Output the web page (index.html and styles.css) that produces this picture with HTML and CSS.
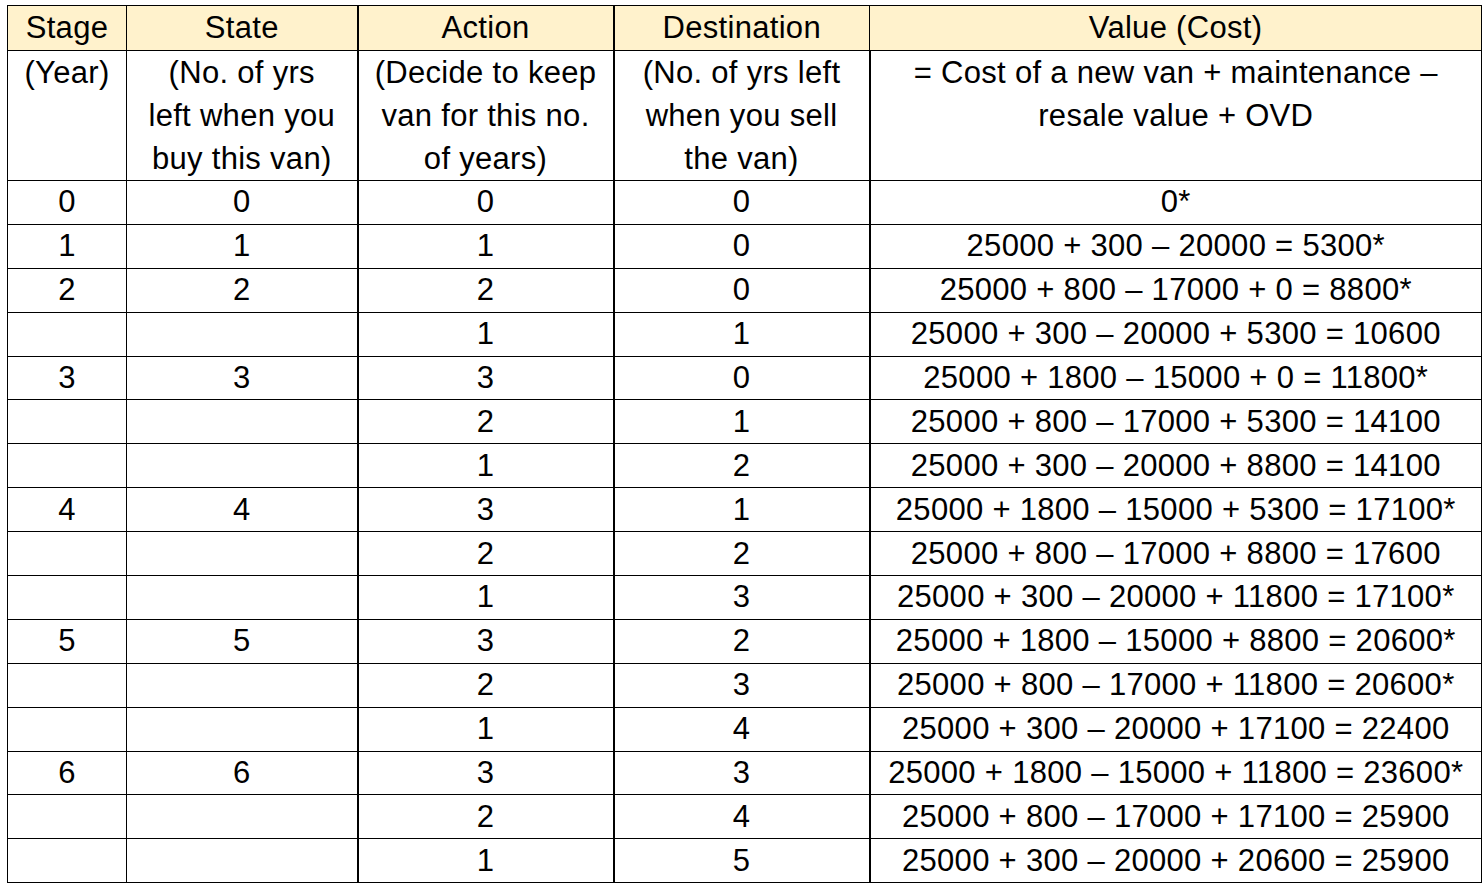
FILE: index.html
```html
<!DOCTYPE html>
<html>
<head>
<meta charset="utf-8">
<link rel="stylesheet" href="styles.css">
</head>
<body>
<table class="dp">
  <colgroup>
    <col class="c1"><col class="c2"><col class="c3"><col class="c4"><col class="c5">
  </colgroup>
  <thead>
    <tr class="head">
      <th>Stage</th><th>State</th><th class="thick">Action</th><th class="thick">Destination</th><th>Value (Cost)</th>
    </tr>
    <tr class="sub">
      <td>(Year)</td>
      <td>(No. of yrs<br>left when you<br>buy this van)</td>
      <td class="thick">(Decide to keep<br>van for this no.<br>of years)</td>
      <td class="thick">(No. of yrs left<br>when you sell<br>the van)</td>
      <td>= Cost of a new van + maintenance –<br>resale value + OVD<br>&nbsp;</td>
    </tr>
  </thead>
  <tbody>
    <tr><td>0</td><td>0</td><td class="thick">0</td><td class="thick">0</td><td>0*</td></tr>
    <tr><td>1</td><td>1</td><td class="thick">1</td><td class="thick">0</td><td>25000 + 300 – 20000 = 5300*</td></tr>
    <tr><td>2</td><td>2</td><td class="thick">2</td><td class="thick">0</td><td>25000 + 800 – 17000 + 0 = 8800*</td></tr>
    <tr><td></td><td></td><td class="thick">1</td><td class="thick">1</td><td>25000 + 300 – 20000 + 5300 = 10600</td></tr>
    <tr><td>3</td><td>3</td><td class="thick">3</td><td class="thick">0</td><td>25000 + 1800 – 15000 + 0 = 11800*</td></tr>
    <tr><td></td><td></td><td class="thick">2</td><td class="thick">1</td><td>25000 + 800 – 17000 + 5300 = 14100</td></tr>
    <tr><td></td><td></td><td class="thick">1</td><td class="thick">2</td><td>25000 + 300 – 20000 + 8800 = 14100</td></tr>
    <tr><td>4</td><td>4</td><td class="thick">3</td><td class="thick">1</td><td>25000 + 1800 – 15000 + 5300 = 17100*</td></tr>
    <tr><td></td><td></td><td class="thick">2</td><td class="thick">2</td><td>25000 + 800 – 17000 + 8800 = 17600</td></tr>
    <tr><td></td><td></td><td class="thick">1</td><td class="thick">3</td><td>25000 + 300 – 20000 + 11800 = 17100*</td></tr>
    <tr><td>5</td><td>5</td><td class="thick">3</td><td class="thick">2</td><td>25000 + 1800 – 15000 + 8800 = 20600*</td></tr>
    <tr><td></td><td></td><td class="thick">2</td><td class="thick">3</td><td>25000 + 800 – 17000 + 11800 = 20600*</td></tr>
    <tr><td></td><td></td><td class="thick">1</td><td class="thick">4</td><td>25000 + 300 – 20000 + 17100 = 22400</td></tr>
    <tr><td>6</td><td>6</td><td class="thick">3</td><td class="thick">3</td><td>25000 + 1800 – 15000 + 11800 = 23600*</td></tr>
    <tr><td></td><td></td><td class="thick">2</td><td class="thick">4</td><td>25000 + 800 – 17000 + 17100 = 25900</td></tr>
    <tr><td></td><td></td><td class="thick">1</td><td class="thick">5</td><td>25000 + 300 – 20000 + 20600 = 25900</td></tr>
  </tbody>
</table>
</body>
</html>
```
FILE: styles.css
```css
html, body {
  margin: 0;
  padding: 0;
  background: #ffffff;
}
body {
  padding: 5px 0 0 7px;
  font-family: "Liberation Sans", Arial, sans-serif;
  color: #000000;
}
.dp {
  border-collapse: collapse;
  table-layout: fixed;
  width: 1474px;
  font-size: 31px;
  letter-spacing: 0.3px;
}
.c1 { width: 119px; }
.c2 { width: 231px; }
.c3 { width: 256px; }
.c4 { width: 256px; }
.c5 { width: 612px; }
.dp th,
.dp td {
  border: 1px solid #000000;
  padding: 0;
  text-align: center;
  vertical-align: middle;
  font-weight: normal;
  line-height: 42px;
  white-space: nowrap;
}
.dp .head th {
  background: #fff2cc;
  height: 44px;
}
.dp .sub td {
  vertical-align: top;
  height: 124px;
  line-height: 43px;
}
.dp tbody td {
  height: 42.9px;
}
.dp .thick {
  border-left-width: 2px;
}
.dp .thick + td:not(.thick) {
  border-left-width: 2px;
}
```
